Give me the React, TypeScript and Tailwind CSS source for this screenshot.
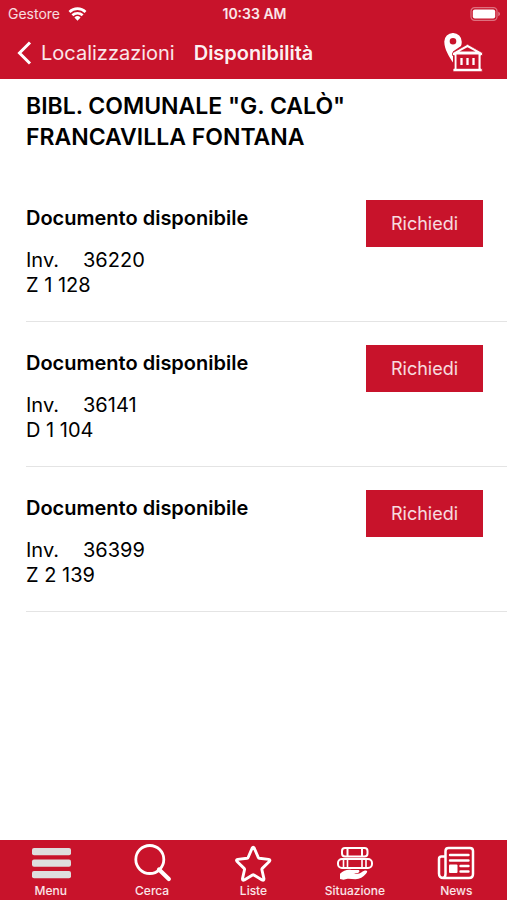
import React from "react";

type Copy = { inv: string; shelf: string };

const copies: Copy[] = [
  { inv: "36220", shelf: "Z 1 128" },
  { inv: "36141", shelf: "D 1 104" },
  { inv: "36399", shelf: "Z 2 139" },
];

const WifiIcon = () => (
  <svg width="19" height="14" viewBox="0 0 20 15" fill="none" stroke="currentColor" strokeWidth="2.8">
    <path d="M1.4 5.3a12.3 12.3 0 0 1 17.2 0" />
    <path d="M4.5 8.9a7.9 7.9 0 0 1 11 0" />
    <path d="M10 14.6 6.7 11.300a4.800 4.800 0 0 1 6.600 0Z" fill="currentColor" stroke="none" />
  </svg>
);

const BatteryIcon = () => (
  <svg width="31" height="14" viewBox="0 0 31 14" fill="none">
    <rect x="1" y="0.7" width="26" height="12.6" rx="3.6" stroke="#fff" strokeOpacity="0.4" strokeWidth="1.2" />
    <rect x="2.8" y="2.5" width="22.4" height="9" rx="2" fill="#fff" />
    <path d="M28.4 4.8c1.9.7 1.9 3.7 0 4.4Z" fill="#fff" fillOpacity="0.5" />
  </svg>
);

const LibraryIcon = () => (
  <svg width="40" height="40" viewBox="0 0 40 40" fill="none">
    <path
      fillRule="evenodd"
      d="M10 0a8.600 8.600 0 0 0-8.700 8.800C1.300 16 6 23.500 10 29.500V18.500L18 13A9 9 0 0 0 18.700 8.800 8.600 8.600 0 0 0 10 0Zm0 5a3.300 3.300 0 1 1 0 6.600 3.300 3.300 0 0 1 0-6.600Z"
      fill="#fff"
    />
    <path d="M9.500 19.800 24.500 11.300 39.500 19.800V22.500H38V35.500H39.200V38.700H10V35.500H11.200V22.500H9.500Z" fill="#fff" stroke="#c8132b" strokeWidth="0.8" />
    <path d="M16.500 18.500 24.500 14.200 32.500 18.500Z" fill="#c8132b" />
    <path d="M13.500 21.500H35.500V35.800H13.500Z" fill="#c8132b" />
    <path d="M18.500 25v7M24.500 25v7M30.500 25v7" stroke="#fff" strokeWidth="2.300" />
  </svg>
);

const MenuIcon = () => (
  <svg width="40" height="38" viewBox="0 0 40 38" fill="#dedede">
    <rect x="1" y="4" width="39" height="7.200" rx="2" />
    <rect x="1" y="15.500" width="39" height="7.200" rx="2" />
    <rect x="1" y="27" width="39" height="7.200" rx="2" />
  </svg>
);

const SearchIcon = () => (
  <svg width="40" height="38" viewBox="0 0 40 38" fill="none" stroke="currentColor">
    <circle cx="17.800" cy="15.500" r="14" strokeWidth="2.800" />
    <path d="m27 25.500 9.800 9.500" strokeWidth="4.200" strokeLinecap="round" />
  </svg>
);

const StarIcon = () => (
  <svg width="40" height="38" viewBox="0 0 40 38" fill="none" stroke="currentColor" strokeWidth="2.900" strokeLinejoin="round">
    <path d="M19.100 4.200q1.100-2.200 2.200 0l4 9.300q.3.700 1 .8l9.300 1.100q2.200.4.700 2.100l-7 6.900q-.6.600-.4 1.300l2 8.900q.2 2.300-1.800 1.400l-8.200-5q-.7-.4-1.400 0l-8.200 5q-2 .9-1.800-1.400l2-8.900q.2-.7-.4-1.300l-7-6.900q-1.500-1.700.7-2.100l9.300-1.100q.7-.1 1-.8Z" />
  </svg>
);

const BooksIcon = () => (
  <svg width="40" height="38" viewBox="0 0 40 38" fill="none" stroke="currentColor" strokeWidth="2">
    <rect x="7" y="4" width="25.500" height="8.500" rx="3" />
    <path d="M12.500 4v8.500M27 4v8.500" />
    <rect x="3" y="15" width="34" height="9" rx="4" />
    <path d="M8.500 15v9M12.500 15v9M27 15v9M31 15v9" strokeWidth="1.600" />
    <path
      d="M5 29.800c3.500-3.200 7.500-4.700 11.500-3.700h6.500c2 0 1.800 2.400 0 2.800l-4.500.9c4 .5 6.500-.3 8.500-1.800 1.800-1.300 3.400-1.800 4.600-1.200 1.100.6.500 1.800-.6 3-3 3.200-6 5.400-10.500 5.400-3.500 0-6.500-.8-9-.2L8.500 35.800 5 35Z"
      fill="currentColor"
      stroke="none"
    />
  </svg>
);

const NewsIcon = () => (
  <svg width="40" height="38" viewBox="0 0 40 38" fill="none" stroke="currentColor" strokeWidth="2.500" strokeLinejoin="round">
    <path d="M9.500 12.500H5.500q-2.500 0-2.500 2.500v14.500q0 4.500 4.500 4.500H33q4 0 4-4V7q0-3-3-3H12.500q-3 0-3 3V30q0 4-3 4" />
    <path d="M14 11h18.500M14 16.500h18.500M24.500 22h8M24.500 27.500h8" strokeWidth="2.400" strokeLinecap="round" />
    <rect x="13" y="20.500" width="8.500" height="8.500" rx="1" fill="currentColor" stroke="none" />
  </svg>
);

const tabs = [
  { label: "Menu", icon: <MenuIcon /> },
  { label: "Cerca", icon: <SearchIcon /> },
  { label: "Liste", icon: <StarIcon /> },
  { label: "Situazione", icon: <BooksIcon /> },
  { label: "News", icon: <NewsIcon /> },
];

const Header = () => (
  <header className="bg-[#c8132b] text-white">
    <div className="grid grid-cols-[1fr_auto_1fr] items-center h-7 pl-2 pr-1.5 text-sm">
      <div className="flex items-center gap-2 text-white/85">
        <span>Gestore</span>
        <span className="text-white">
          <WifiIcon />
        </span>
      </div>
      <span className="text-center font-semibold text-white/90">10:33 AM</span>
      <div className="flex justify-end">
        <BatteryIcon />
      </div>
    </div>
    <div className="grid grid-cols-[1fr_auto_1fr] items-center h-[51px] pb-px px-4">
      <a href="#localizzazioni" className="flex items-center gap-2 text-xl text-white/90">
        <svg width="17" height="24" viewBox="0 0 17 24" fill="none" stroke="#fff" strokeWidth="3">
          <path d="M14 1.500 3.500 12 14 22.500" />
        </svg>
        Localizzazioni
      </a>
      <h1 className="text-xl font-semibold text-white/95">Disponibilità</h1>
      <button type="button" aria-label="Biblioteca" className="justify-self-end mr-2">
        <LibraryIcon />
      </button>
    </div>
  </header>
);

const CopyRow = ({ inv, shelf }: Copy) => (
  <li className="flex items-start justify-between h-[145px] pt-[23px] pr-6 border-b border-[#e4e4e4]">
    <div className="text-xl leading-[25px]">
      <h3 className="pt-1.5 pb-[17px] font-semibold">Documento disponibile</h3>
      <p className="flex">
        <span className="w-[57px]">Inv.</span>
        <span>{inv}</span>
      </p>
      <p>{shelf}</p>
    </div>
    <button type="button" className="bg-[#c8132b] w-[117px] h-[47px] text-lg text-white/85">
      Richiedi
    </button>
  </li>
);

export default function App() {
  return (
    <div className="flex flex-col min-h-screen bg-white text-black font-['Inter','Liberation_Sans',sans-serif]">
      <Header />
      <main className="flex-1 pl-[26px]">
        <h2 className="pt-3 pb-6 text-[23px] leading-[31px] font-semibold">
          BIBL. COMUNALE "G. CALÒ"
          <br />
          FRANCAVILLA FONTANA
        </h2>
        <ul>
          {copies.map((copy) => (
            <CopyRow key={copy.inv} {...copy} />
          ))}
        </ul>
      </main>
      <nav className="grid grid-cols-5 h-[60px] pt-1 bg-[#c8132b] text-white">
        {tabs.map((tab) => (
          <a key={tab.label} href={"#" + tab.label.toLowerCase()} className="flex flex-col items-center">
            {tab.icon}
            <span className="text-xs leading-[18px] font-medium text-white/90">{tab.label}</span>
          </a>
        ))}
      </nav>
    </div>
  );
}
